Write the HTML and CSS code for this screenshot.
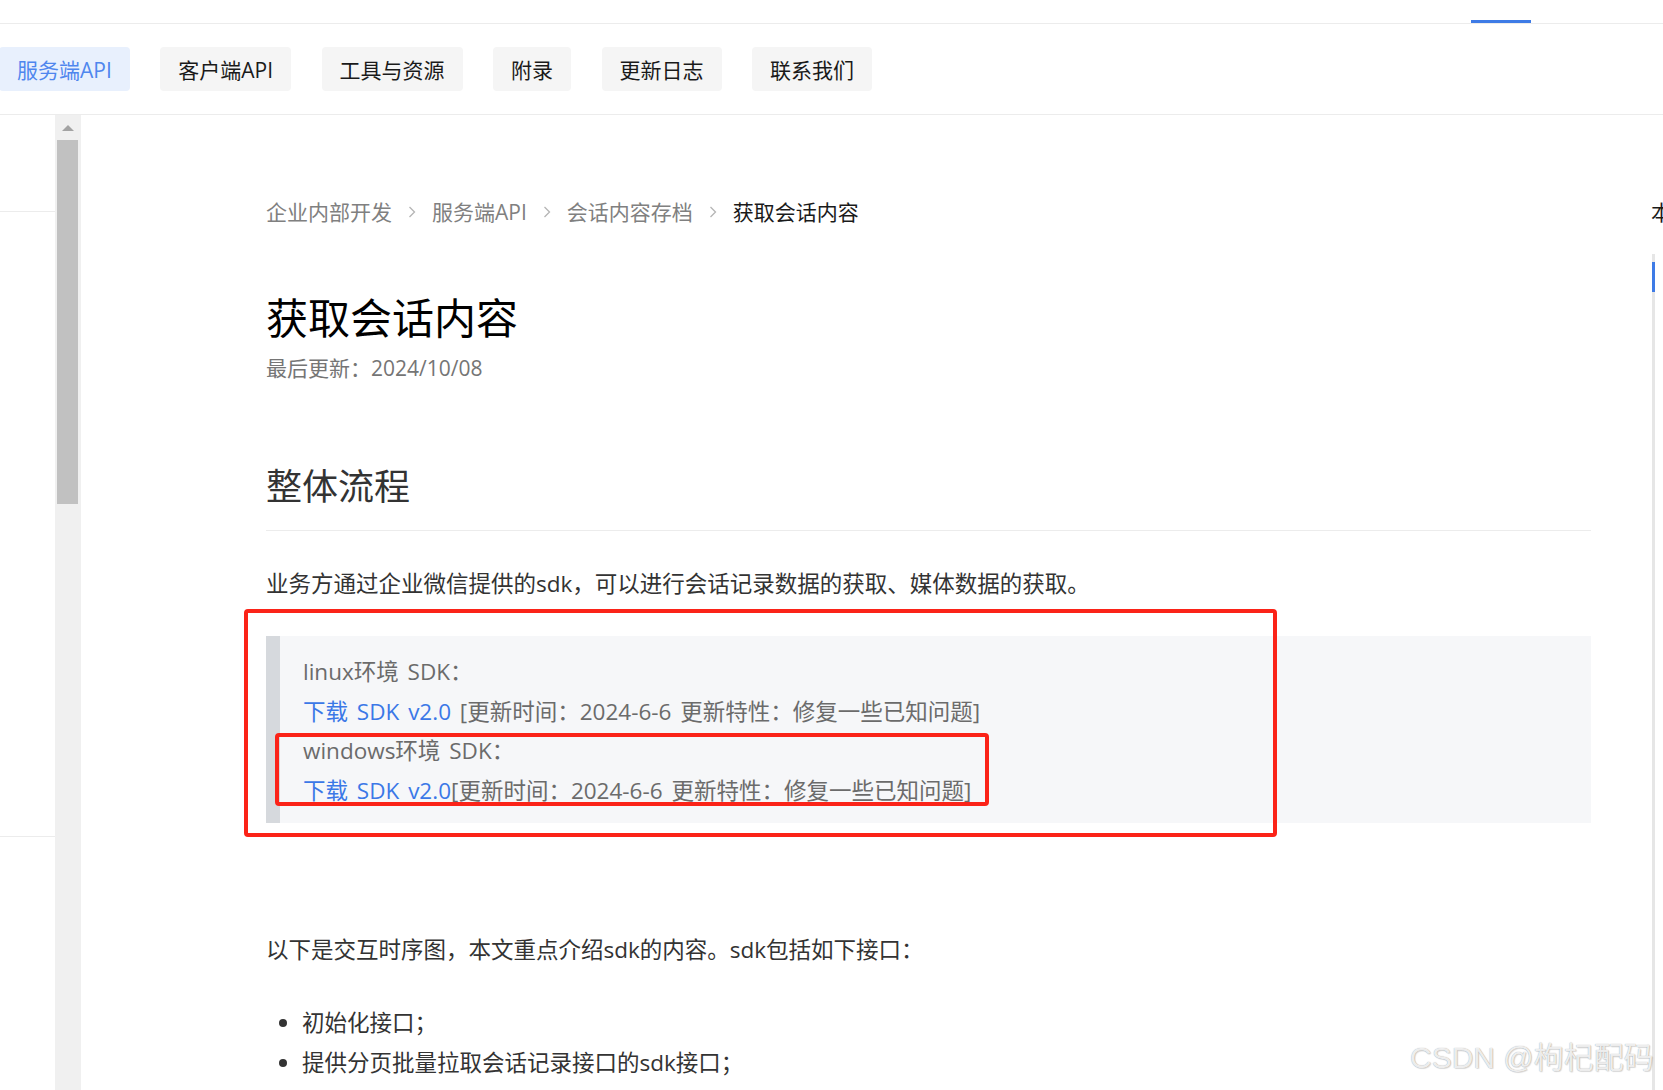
FILE: index.html
```html
<!DOCTYPE html>
<html lang="zh-CN">
<head>
<meta charset="utf-8">
<title>获取会话内容</title>
<link rel="stylesheet" href="styles.css">
</head>
<body>
<div class="page">
  <header class="topbar">
    <span class="topbar-tab"></span>
  </header>
  <nav class="tabs">
    <a class="tab tab-active">服务端API</a>
    <a class="tab">客户端API</a>
    <a class="tab">工具与资源</a>
    <a class="tab">附录</a>
    <a class="tab">更新日志</a>
    <a class="tab">联系我们</a>
  </nav>
  <div class="layout">
    <aside class="sidebar">
      <div class="side-block side-top"></div>
      <div class="side-block side-mid"></div>
      <div class="side-block side-bottom"></div>
    </aside>
    <div class="scrollbar">
      <span class="scroll-arrow"></span>
      <span class="scroll-thumb"></span>
    </div>
    <main class="content">
      <div class="crumbs">
        <span class="crumb">企业内部开发</span>
        <svg class="chev" width="8" height="14" viewBox="0 0 8 14"><path d="M1.5 2 L6.5 7 L1.5 12" fill="none" stroke="#b5b5b5" stroke-width="1.3"/></svg>
        <span class="crumb">服务端API</span>
        <svg class="chev" width="8" height="14" viewBox="0 0 8 14"><path d="M1.5 2 L6.5 7 L1.5 12" fill="none" stroke="#b5b5b5" stroke-width="1.3"/></svg>
        <span class="crumb">会话内容存档</span>
        <svg class="chev" width="8" height="14" viewBox="0 0 8 14"><path d="M1.5 2 L6.5 7 L1.5 12" fill="none" stroke="#b5b5b5" stroke-width="1.3"/></svg>
        <span class="crumb crumb-current">获取会话内容</span>
      </div>
      <h1 class="title">获取会话内容</h1>
      <div class="updated">最后更新：2024/10/08</div>
      <h2 class="section">整体流程</h2>
      <p class="para p-first">业务方通过企业微信提供的sdk，可以进行会话记录数据的获取、媒体数据的获取。</p>
      <blockquote class="quote">
        <div>linux环境 SDK：</div>
        <div><a class="link">下载 SDK v2.0</a> [更新时间：2024-6-6 更新特性：修复一些已知问题]</div>
        <div>windows环境 SDK：</div>
        <div><a class="link">下载 SDK v2.0</a>[更新时间：2024-6-6 更新特性：修复一些已知问题]</div>
      </blockquote>
      <p class="para p-second">以下是交互时序图，本文重点介绍sdk的内容。sdk包括如下接口：</p>
      <ul class="list">
        <li>初始化接口；</li>
        <li>提供分页批量拉取会话记录接口的sdk接口；</li>
        <li>提供拉取媒体消息的sdk接口；</li>
      </ul>
    </main>
    <aside class="toc">
      <div class="toc-title">本页目录</div>
      <div class="toc-track"><span class="toc-active"></span></div>
    </aside>
  </div>
  <div class="mark mark-outer"></div>
  <div class="mark mark-inner"></div>
  <div class="watermark">CSDN @枸杞配码</div>
</div>
</body>
</html>
```

FILE: styles.css
```css
* { box-sizing: border-box; }
html, body { margin: 0; padding: 0; background: #fff; }
body {
  font-family: "Open Sans", "Noto Sans CJK SC", sans-serif;
  color: #1a1a1a;
}
.page {
  position: relative;
  width: 1663px;
  height: 1090px;
  overflow: hidden;
  display: flex;
  flex-direction: column;
}

/* top header (mostly scrolled away) */
.topbar {
  height: 24px;
  flex: 0 0 24px;
  border-bottom: 1px solid #ececec;
  display: flex;
  align-items: flex-end;
}
.topbar-tab {
  margin-left: auto;
  margin-right: 132px;
  width: 60px;
  height: 3px;
  background: #3e7be6;
}

/* secondary tabs */
.tabs {
  flex: 0 0 91px;
  height: 91px;
  border-bottom: 1px solid #ececec;
  display: flex;
  align-items: flex-start;
  gap: 30.5px;
  padding-top: 23px;
  margin-left: -1px;
}
.tab {
  height: 44px;
  padding: 0 18px;
  display: flex;
  align-items: center;
  font-size: 21px;
  color: #1a1a1a;
  background: #f5f5f5;
  border-radius: 4px;
  white-space: nowrap;
}
.tab-active {
  color: #4f86ee;
  background: #e8f0fd;
}

/* main layout */
.layout {
  flex: 1 1 auto;
  display: flex;
  min-height: 0;
}
.sidebar {
  flex: 0 0 55px;
  display: flex;
  flex-direction: column;
}
.side-block { border-bottom: 1px solid #ececec; }
.side-top { height: 97px; }
.side-mid { height: 625px; }
.side-bottom { border-bottom: none; flex: 1; }

.scrollbar {
  flex: 0 0 26px;
  background: #f0f0f0;
  display: flex;
  flex-direction: column;
  align-items: center;
  padding-top: 10px;
}
.scroll-arrow {
  width: 0;
  height: 0;
  border-left: 6px solid transparent;
  border-right: 6px solid transparent;
  border-bottom: 6px solid #a3a3a3;
  margin-left: -1px;
}
.scroll-thumb {
  margin-top: 9px;
  width: 21px;
  height: 364px;
  background: #c1c1c1;
  margin-left: -1px;
}

.content {
  flex: 0 0 1570px;
  padding: 82px 60px 0 185px;
}
.crumbs {
  display: flex;
  align-items: center;
  gap: 16px;
  height: 30px;
  font-size: 21px;
  line-height: 30px;
}
.crumb { color: #808080; white-space: nowrap; }
.crumb-current { color: #1a1a1a; }
.chev { display: block; }

.title {
  margin: 62px 0 0;
  font-size: 42px;
  line-height: 58px;
  font-weight: 400;
  color: #000;
}
.updated {
  margin-top: 6px;
  font-size: 21px;
  line-height: 30px;
  color: #757575;
}
.section {
  margin: 79px 0 0;
  padding-bottom: 18px;
  border-bottom: 1px solid #ececec;
  font-size: 36px;
  line-height: 50px;
  font-weight: 400;
  color: #333;
}
.para {
  margin: 0;
  font-size: 22.5px;
  line-height: 40px;
  color: #333;
}
.p-first { margin-top: 33px; }
.quote {
  margin: 32px 0 0;
  padding: 16px 20px 13px 23px;
  background: #f6f7f9;
  border-left: 14px solid #d6d9dd;
  font-size: 22.5px;
  line-height: 39.6px;
  word-spacing: 3px;
  color: #6b6b6b;
}
.link { color: #3b78e7; }
.p-second { margin-top: 107px; }
.list {
  margin: 33px 0 0;
  padding-left: 36px;
  font-size: 22.5px;
  line-height: 40px;
  color: #333;
}

.toc {
  flex: 1 1 auto;
  overflow: hidden;
  padding-top: 82px;
  display: flex;
  flex-direction: column;
}
.toc-title {
  font-size: 21px;
  line-height: 30px;
  white-space: nowrap;
  color: #1a1a1a;
}
.toc-track {
  margin-top: 27px;
  margin-left: 1px;
  width: 3px;
  flex: 1;
  background: #e6e6e6;
  padding-top: 8px;
}
.toc-active {
  display: block;
  width: 3px;
  height: 30px;
  background: #3e7be6;
}

/* red annotation marks drawn over the screenshot */
.mark {
  position: absolute;
  border: 4px solid #fb2318;
  border-radius: 4px;
}
.mark-outer { left: 244px; top: 609px; width: 1033px; height: 228px; }
.mark-inner { left: 275px; top: 733px; width: 714px; height: 73px; }

.watermark {
  position: absolute;
  left: 1410px;
  top: 1040px;
  font-family: "Liberation Sans", "Noto Sans CJK SC", sans-serif;
  font-size: 30px;
  line-height: 36px;
  white-space: nowrap;
  color: rgba(250, 250, 250, 0.9);
  text-shadow: 0 0 1px rgba(0, 0, 0, 0.4), 1px 1px 1px rgba(0, 0, 0, 0.12);
}
```
